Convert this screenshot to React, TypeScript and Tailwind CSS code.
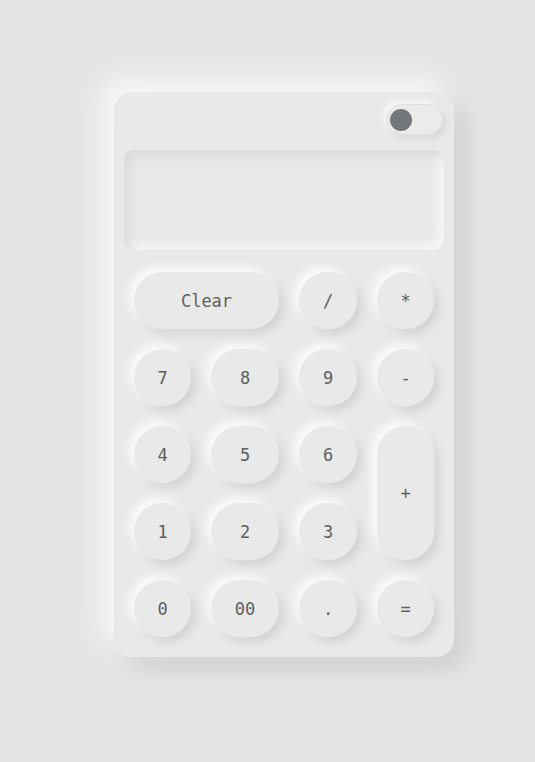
const keys: { label: string; cls?: string }[] = [
  { label: 'Clear', cls: 'col-span-2' },
  { label: '/' },
  { label: '*' },
  { label: '7' },
  { label: '8' },
  { label: '9' },
  { label: '-' },
  { label: '4' },
  { label: '5' },
  { label: '6' },
  { label: '+', cls: 'row-span-2' },
  { label: '1' },
  { label: '2' },
  { label: '3' },
  { label: '0' },
  { label: '00' },
  { label: '.' },
  { label: '=' },
];

export default function App() {
  return (
    <div className="min-h-[762px] bg-[#e4e6e5] pt-[92px] pl-[114px]">
      <div className="w-[340px] h-[565px] rounded-[18px] bg-[#e8e9e8] px-[10px] pt-[12px] shadow-[-12px_-12px_24px_#f8f8f8,12px_12px_24px_#cdcecd]">
        {/* toggle */}
        <div className="flex justify-end pr-[1px]">
          <div className="w-[57px] h-[31px] rounded-full bg-[#ebebea] border border-[#e2e0de] flex items-center pl-[3px] shadow-[-3px_-3px_6px_#f9f9f9,3px_3px_6px_#d6d6d5]">
            <div className="w-[22px] h-[22px] rounded-full bg-[#75787b]" />
          </div>
        </div>

        {/* display */}
        <div className="mt-[15px] h-[100px] rounded-[10px] bg-[#e7e8e7] shadow-[inset_6px_6px_10px_#dbdcdb,inset_-6px_-6px_10px_#f7f7f7]" />

        {/* keypad */}
        <div className="mt-[22px] ml-[10px] grid grid-cols-[57px_68px_58px_57px] auto-rows-[57px] gap-5">
          {keys.map((k) => (
            <button
              key={k.label}
              className={`rounded-full bg-[#e8e9e8] text-[#5e5e5e] text-[17px] pt-[2px] font-['DejaVu_Sans_Mono',monospace] flex items-center justify-center shadow-[-5px_-5px_10px_#fbfbfb,5px_5px_10px_#d2d3d2] ${k.cls ?? ''}`}
            >
              {k.label}
            </button>
          ))}
        </div>
      </div>
    </div>
  );
}
